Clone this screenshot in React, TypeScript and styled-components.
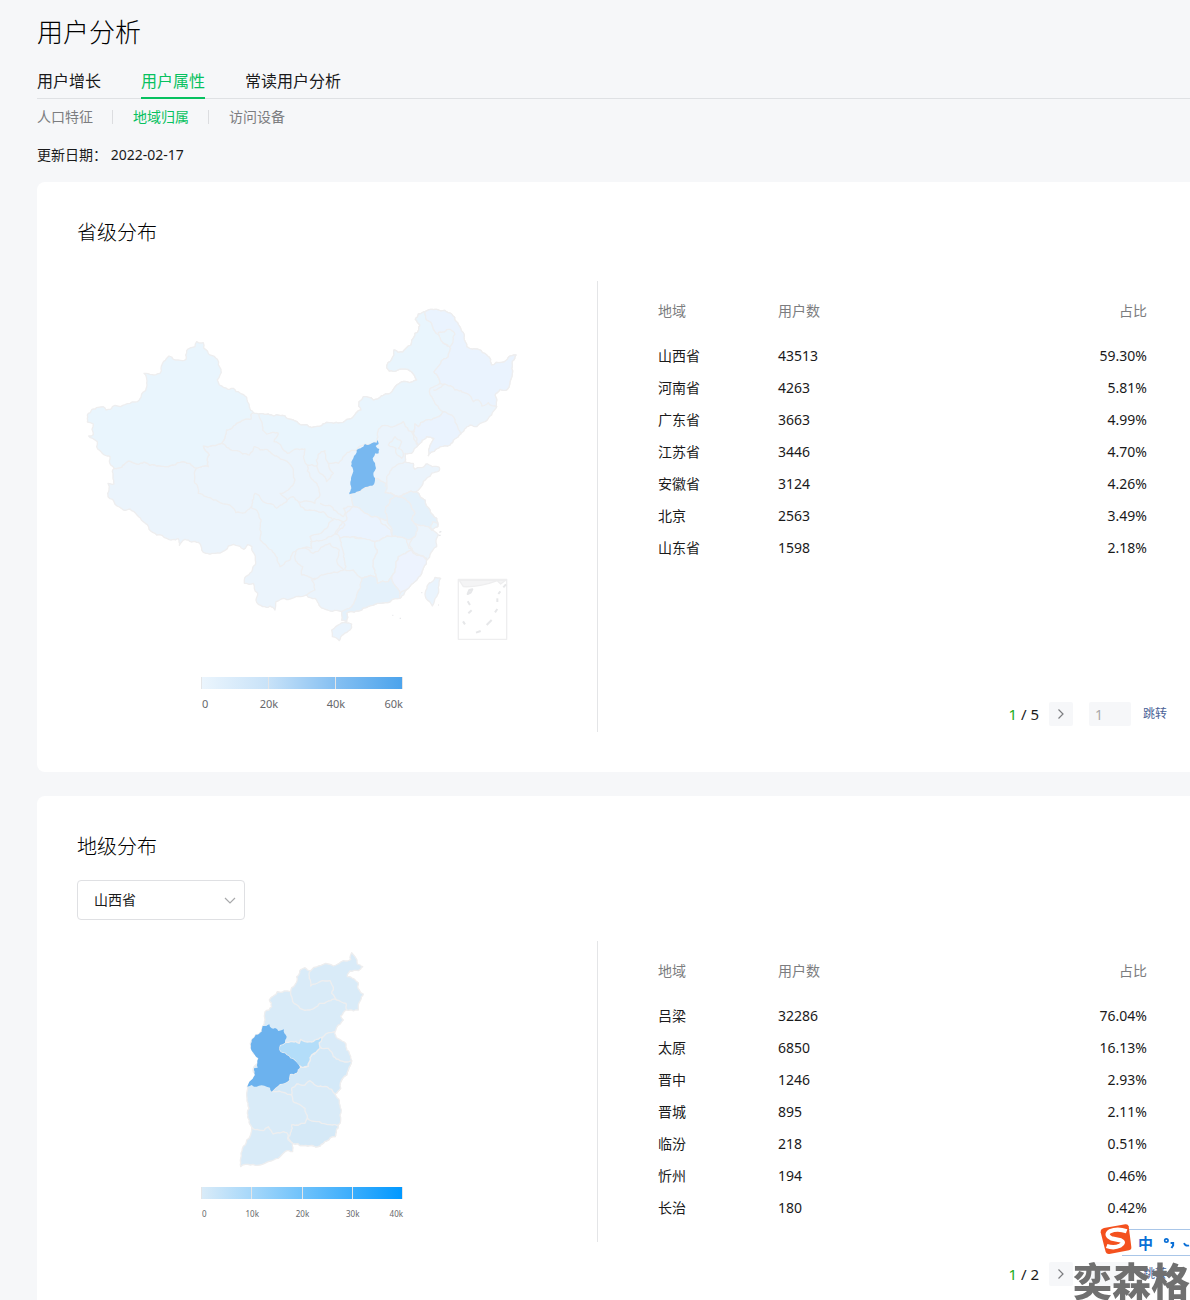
import React from "react";
import styled, { createGlobalStyle } from "styled-components";

const GlobalStyle = createGlobalStyle`
  * { box-sizing: border-box; }
  body {
    margin: 0;
    background: #f6f7f9;
    color: #1a1a1b;
    font-family: "Noto Sans", "Noto Sans CJK SC", sans-serif;
    font-size: 14px;
    font-weight: 400;
    line-height: 20px;
  }
  button, input, select { font: inherit; color: inherit; }
`;

/* ---------- page parts ---------- */

const Page = styled.main`
  height: 100vh;
  overflow: hidden;
  padding: 12px 0 0 37px;
`;

const Title = styled.h1`
  margin: 0 0 17px;
  color: #000;
  font-size: 26px;
  font-weight: 300;
  line-height: 40px;
`;

const Tabs = styled.nav`
  display: flex;
  gap: 40px;
  border-bottom: 1px solid #dfe1e4;
`;

const Tab = styled.a<{ $active?: boolean }>`
  margin-bottom: -1px;
  padding-bottom: 4px;
  border-bottom: 2px solid ${(p) => (p.$active ? "#07c160" : "transparent")};
  color: ${(p) => (p.$active ? "#07c160" : "inherit")};
  font-size: 16px;
  line-height: 24px;
  text-decoration: none;
`;

const SubTabs = styled.nav`
  display: flex;
  align-items: center;
  margin: 8px 0 18px;
`;

const SubTab = styled.a<{ $active?: boolean }>`
  color: ${(p) => (p.$active ? "#07c160" : "#7c7d80")};
  text-decoration: none;
`;

const Separator = styled.span`
  width: 1px;
  height: 14px;
  margin: 0 20px 0 19px;
  background: #dcdde0;
`;

const Updated = styled.p`
  margin: 0 0 17px;
`;

const Card = styled.section`
  margin-bottom: 24px;
  padding: 36px 23px 40px 40px;
  border-radius: 8px 0 0 8px;
  background: #fff;
`;

const CardTitle = styled.h2`
  margin: 0;
  color: #000;
  font-size: 20px;
  font-weight: 300;
  line-height: 30px;
`;

const SelectBox = styled.label`
  position: relative;
  display: block;
  width: 168px;
  margin-top: 18px;
  svg {
    position: absolute;
    top: 16px;
    right: 9px;
    pointer-events: none;
  }
`;

const Select = styled.select`
  appearance: none;
  width: 100%;
  height: 40px;
  padding: 0 32px 0 16px;
  border: 1px solid #dfe0e3;
  border-radius: 4px;
  background: #fff;
`;

const Split = styled.div<{ $gap: number }>`
  display: flex;
  align-items: flex-start;
  margin-top: ${(p) => p.$gap}px;
`;

const Chart = styled.div<{ $height: number; $top: number }>`
  flex: 0 0 521px;
  height: ${(p) => p.$height}px;
  padding: ${(p) => p.$top}px 70px 0 0;
  border-right: 1px solid #e4e5e7;
  svg { display: block; width: 100%; }
`;

const Legend = styled.div<{ $top: number }>`
  width: 202px;
  margin: ${(p) => p.$top}px auto 0;
`;

const LegendBar = styled.div<{ $fill: string }>`
  display: flex;
  height: 12px;
  border-left: 1px solid #e4e5e7;
  background: ${(p) => p.$fill};
`;

const LegendStep = styled.span`
  flex: 1;
  border-right: 1px solid #e4e5e7;
`;

const LegendLabels = styled.div<{ $size: number }>`
  display: flex;
  margin-top: 5px;
  color: #66676b;
  font-size: ${(p) => p.$size}px;
  span { flex: 2 0 0; text-align: center; }
  span:first-child { flex-grow: 1; padding-left: 1px; text-align: left; }
  span:last-child { flex-grow: 1; text-align: right; }
`;

const Detail = styled.div`
  flex: 1;
  padding-left: 60px;
`;

const TableArea = styled.div<{ $height: number }>`
  min-height: ${(p) => p.$height}px;
  padding-right: 20px;
`;

const Table = styled.table`
  width: 100%;
  border-collapse: collapse;
  th { height: 59px; color: #7c7d80; font-weight: 400; }
  td { height: 32px; }
  th, td { padding: 0; text-align: left; }
  th:first-child { width: 120px; }
  th:last-child, td:last-child { text-align: right; }
`;

const Pager = styled.div`
  display: flex;
  align-items: center;
  justify-content: flex-end;
  height: 24px;
`;

const PageCount = styled.span`
  margin-right: 10px;
  font-size: 15px;
  b { color: #1aad19; font-weight: 400; }
`;

const NextButton = styled.button`
  display: grid;
  place-items: center;
  width: 24px;
  height: 24px;
  margin-right: 16px;
  padding: 0;
  border: 0;
  border-radius: 2px;
  background: #f6f7f9;
`;

const PageInput = styled.input`
  width: 42px;
  height: 24px;
  margin-right: 12px;
  padding: 0 6px;
  border: 0;
  border-radius: 2px;
  background: #f6f7f9;
  font-size: 14px;
  &::placeholder { color: #a9a9ab; opacity: 1; }
`;

const JumpLink = styled.a`
  color: #4a6296;
  font-size: 12px;
  text-decoration: none;
`;

/* ---------- floating layers ---------- */

const ImeBar = styled.aside`
  position: fixed;
  right: 0;
  bottom: 44px;
  display: flex;
  align-items: flex-end;
  width: 90px;
  height: 32px;
`;

const ImeLogo = styled.svg`
  position: relative;
  z-index: 1;
  flex: none;
  align-self: flex-start;
`;

const ImeKeys = styled.div`
  display: flex;
  align-items: center;
  gap: 10px;
  flex: 1;
  height: 27px;
  margin-left: -10px;
  padding-left: 16px;
  border: solid #a9c6e8;
  border-width: 1px 0;
  background: #fff;
  color: #0a6fd6;
  font-size: 15px;
  font-weight: 700;
  overflow: hidden;
  white-space: nowrap;
`;

const Watermark = styled.div`
  position: fixed;
  right: 0;
  bottom: 0;
  height: 39px;
  color: #707070;
  font-size: 39px;
  font-weight: 900;
  line-height: 39px;
  pointer-events: none;
`;

/* ---------- map drawing ---------- */

type Point = [number, number];

const parse = (text: string): Point[] =>
  text.trim().split(/\s+/).map((pair) => pair.split(",").map(Number) as Point);

/* Breaks an edge into small irregular steps. The offsets depend only on the
   two end points, so neighbouring regions keep a common border. */
const splitEdge = (a: Point, b: Point, depth: number): Point[] => {
  const length = Math.hypot(b[0] - a[0], b[1] - a[1]);
  if (depth === 0 || length < 9) return [b];
  const seed = Math.sin((a[0] + b[0]) * 12.9898 + (a[1] + b[1]) * 78.233) * 43758.5453;
  const shift = (seed - Math.floor(seed) - 0.5) * Math.min(length * 0.32, 10);
  const forward = a[0] < b[0] || (a[0] === b[0] && a[1] < b[1]) ? 1 : -1;
  const mid: Point = [
    Math.round((a[0] + b[0]) / 2 - (forward * shift * (b[1] - a[1])) / length),
    Math.round((a[1] + b[1]) / 2 + (forward * shift * (b[0] - a[0])) / length),
  ];
  return [...splitEdge(a, mid, depth - 1), ...splitEdge(mid, b, depth - 1)];
};

const toPath = (text: string, closed: boolean) => {
  const points = parse(text);
  const ring = closed ? [...points, points[0]] : points;
  const out: Point[] = [ring[0]];
  for (let i = 1; i < ring.length; i++) out.push(...splitEdge(ring[i - 1], ring[i], 3));
  return "M" + out.map((p) => p.join(" ")).join("L") + (closed ? "Z" : "");
};

interface Shape { fill: string; points: string }

const BORDER = "#eeeeef";

const Region = ({ fill, points }: Shape) => <path d={toPath(points, true)} fill={fill} />;
const Border = ({ points }: { points: string }) => <path d={toPath(points, false)} fill="none" />;

const LIGHT = "#e9f5fd";
const PALE = "#ebf4fc";
const LILAC = "#eaf3fe";
const DEEP = "#e4f1fb";

const chinaShapes: Shape[] = [
  { fill: PALE, points: "520,338 537,342 580,348 615,348 640,360 660,373 695,383 740,367 795,363 820,350 843,330 837,305 850,290 880,300 930,280 950,255 980,245 1010,240 1000,222 975,207 950,212 928,213 920,203 942,150 968,156 993,135 1005,100 1020,75 1006,58 1015,42 1035,35 1070,28 1115,42 1142,85 1160,140 1195,148 1220,165 1235,195 1265,187 1308,165 1295,205 1282,268 1260,268 1245,285 1250,320 1235,345 1190,380 1170,375 1142,402 1110,435 1080,440 1045,467 1048,445 1062,415 1040,410 1015,435 995,460 975,460 975,485 1000,490 1005,508 1038,492 1078,502 1078,512 1040,535 1008,575 1035,600 1050,630 1070,655 1073,680 1055,690 1075,705 1070,740 1040,780 1025,820 985,865 960,895 900,910 845,930 800,940 800,965 785,960 785,935 730,925 705,895 680,885 630,897 610,895 588,905 585,930 570,918 548,920 528,900 533,880 520,850 493,850 497,830 525,795 522,760 516,740 503,734 492,748 460,733 405,760 370,757 355,727 315,718 298,736 295,716 260,715 230,705 190,665 150,627 130,630 84,590 84,550 102,552 98,510 103,505 125,502 142,485 175,493 192,486 210,496 230,498 270,497 300,487 330,490 350,504 385,500 383,485 388,465 370,438 425,430 440,390 460,378 480,366 512,358 512,345" },
  { fill: LIGHT, points: "22,345 36,328 54,322 70,320 78,330 92,328 105,316 122,320 150,310 178,300 185,282 197,272 197,225 192,220 240,220 243,205 267,168 280,178 308,182 318,178 320,152 330,144 345,140 350,125 370,128 372,145 390,165 412,178 423,208 412,240 418,255 460,265 500,292 508,320 520,338 512,345 512,358 480,366 460,378 440,390 425,430 370,438 388,465 383,485 385,500 350,504 330,490 300,487 270,497 230,498 210,496 192,486 175,493 142,485 125,502 103,505 92,495 90,470 60,452 50,440 52,425 38,415 26,408 40,404 40,372 22,366" },
  { fill: LIGHT, points: "537,342 580,348 615,348 640,360 660,373 695,383 740,367 795,363 820,350 843,330 837,305 850,290 880,300 930,280 950,255 980,245 1010,240 1000,222 975,207 950,212 928,213 920,203 942,150 968,156 993,135 1005,100 1020,75 1006,58 1015,42 1035,35 1040,60 1055,70 1065,95 1080,108 1090,130 1112,145 1105,170 1062,215 1080,250 1050,265 1060,300 1090,335 1070,352 1035,362 1015,380 1005,372 1002,395 985,392 970,365 940,380 905,378 892,400 892,422 855,432 830,450 795,465 775,490 745,490 735,452 715,462 710,498 682,495 670,470 675,447 640,450 622,460 605,442 582,425 595,400 560,402 548,390" },
  { fill: LILAC, points: "1035,35 1070,28 1115,42 1142,85 1160,140 1195,148 1220,165 1235,195 1265,187 1308,165 1295,205 1282,268 1260,268 1245,285 1250,320 1225,308 1205,318 1195,300 1180,305 1160,280 1125,270 1095,252 1080,250 1062,215 1105,170 1112,145 1090,130 1080,108 1065,95 1055,70 1040,60" },
  { fill: LIGHT, points: "1075,97 1110,88 1125,103 1110,140 1092,130" },
  { fill: LILAC, points: "1090,335 1115,345 1142,402 1110,435 1080,440 1045,467 1048,445 1062,415 1040,410 1015,435 1000,395 1002,395 1005,372 1015,380 1035,362 1070,352" },
  { fill: LIGHT, points: "925,435 945,410 965,425 955,445 970,460 965,475 952,465 948,445" },
  { fill: LIGHT, points: "512,622 525,580 545,600 590,625 622,600 640,590 655,605 675,630 730,635 760,660 740,685 690,710 695,745 665,745 650,750 630,780 600,800 575,750 550,730 541,720 541,680 535,640" },
  { fill: DEEP, points: "885,535 920,550 915,578 948,588 930,600 918,620 925,660 890,650 855,640 820,620 812,588 850,565 877,555" },
  { fill: DEEP, points: "948,588 975,595 990,610 1005,640 995,660 1013,685 1005,710 980,718 935,710 932,680 918,620 930,600" },
  { fill: DEEP, points: "948,588 1008,575 1035,600 1050,630 1070,655 1073,680 1055,690 1045,680 1015,675 995,660 1005,640 990,610 975,595" },
  { fill: LIGHT, points: "1058,665 1073,670 1073,680 1055,688" },
  { fill: LILAC, points: "820,620 790,625 800,660 765,700 780,715 820,710 860,720 885,725 935,710 932,690 890,650 855,640" },
  { fill: LIGHT, points: "780,715 820,710 885,725 892,750 880,780 888,830 845,835 820,810 795,810 790,770" },
  { fill: LIGHT, points: "885,725 935,710 980,718 995,750 955,770 935,830 925,845 892,850 888,830 880,780 892,750" },
  { fill: "#edf3fe", points: "995,750 1040,775 1040,780 1025,820 985,865 960,880 935,830 955,770" },
  { fill: DEEP, points: "845,835 888,830 892,850 925,845 935,830 960,880 960,895 900,910 845,930 800,940 800,965 785,960 785,935 815,920 830,885" },
  { fill: "#eaf4fd", points: "755,990 780,972 815,972 810,990 778,1022 757,1010" },
  { fill: "#eaf4fd", points: "1038,870 1065,832 1082,835 1070,890 1057,918 1038,895" },
];

const shanxiProvince =
  "813,498 820,475 830,450 842,445 855,432 864,435 875,430 890,428 892,420 896,432 887,438 892,445 898,447 896,460 886,460 878,475 888,505 880,522 885,535 877,557 850,565 830,575 808,583 814,565 813,540 818,520";

const chinaBorders = [
  "350,504 345,550 355,580 400,600 455,620 467,638 495,638 512,622",
  "425,430 470,452 508,465 522,440 540,450 560,448 590,468 635,500 645,540 625,570 600,580 622,600",
  "682,495 690,530 715,560 720,585 705,610 655,605",
  "745,490 760,520 740,545 720,520 710,498",
  "720,610 755,620 790,650 820,620",
  "1095,252 1060,270",
  "1005,395 995,395 1013,435",
  "975,485 945,500 920,530 915,560",
  "915,578 948,588 1008,575",
  "1005,710 988,735 1000,760 1040,780",
  "760,655 795,675 760,705 730,720 690,725",
  "650,750 645,775 668,800 665,825 710,835 750,820 792,810 770,780 778,750 750,730 700,760 665,745",
  "710,835 695,840 705,870 680,885",
];

const seaMarks = ["533,394 540,405", "535,430 545,421", "519,454 525,463", "558,488 572,483", "590,465 605,450", "615,427 622,417", "622,385 622,396", "625,372 631,364", "640,352 648,343"];

const ChinaMap = () => (
  <svg viewBox="-9 0 1350 1050" role="img" aria-label="省级分布" strokeLinejoin="round">
    <g stroke={BORDER} strokeWidth="4">
      {chinaShapes.map((s) => <Region key={s.points} {...s} />)}
      {chinaBorders.map((b) => <Border key={b} points={b} />)}
      <path d="M1135 838H1280V1018H1135Z" fill="#fff" />
      <path d="M1138 841H1277L1262 852L1252 842Q1200 862 1150 860Z" fill="#f4f4f5" />
    </g>
    <Region fill="#78b8f0" points={shanxiProvince} />
    <g transform="translate(630 510)" stroke="#e6e7e9" strokeWidth="6" fill="none">
      <path d="M533 372L538 360L547 358L542 368Z" />
      {seaMarks.map((m) => <polyline key={m} points={m} />)}
      <path d="M307 436h3M329 445h4M394 368h3M444 405h2M448 187l6 -3M446 196h6" strokeWidth="4" />
    </g>
  </svg>
);

const SOFT = "#d9ebf8";

const shanxiShapes: Shape[] = [
  { fill: SOFT, points: "395,38 405,50 412,72 428,80 415,92 390,93 382,110 415,128 418,150 430,162 422,180 415,210 400,213 380,210 362,228 370,240 350,262 345,275 352,295 378,312 380,330 395,362 368,415 362,445 345,462 360,495 355,555 345,590 320,603 300,618 250,617 218,610 218,635 195,635 175,655 120,675 62,680 62,655 80,600 95,570 95,562 82,520 80,460 82,440 105,405 100,385 115,370 115,355 92,320 95,300 125,275 128,258 135,240 135,215 155,200 148,180 172,155 212,155 230,110 255,83 272,92 295,78 325,72 340,78 370,62 392,58" },
  { fill: "#d4e9f8", points: "300,320 325,325 340,350 360,362 395,362 368,415 362,445 345,462 320,440 285,435 270,422 255,435 230,432 215,445 215,465 165,455 155,455 180,432 208,420 210,402 230,398 240,382 265,378 275,345" },
  { fill: "#d5e9f7", points: "262,535 290,545 320,553 355,555 345,590 320,603 300,618 250,617 218,610 205,590 215,555 255,550" },
  { fill: "#b3ddf9", points: "195,308 238,310 242,298 270,305 310,290 298,308 300,325 275,345 265,378 245,382 225,362 200,345 178,330 180,315" },
];

const luliang =
  "128,258 148,253 155,265 165,264 175,273 192,268 200,290 195,308 180,315 178,330 200,345 225,362 240,382 230,398 210,402 208,420 180,432 155,455 150,443 140,440 110,440 95,435 82,440 88,425 105,405 102,385 113,383 115,355 108,350 92,325 95,300 125,275";

const shanxiBorders = [
  "272,92 272,138 300,125 330,122 340,150 335,160 350,180 378,190 380,210",
  "212,155 218,185 240,205 270,210 300,190 350,180",
  "310,290 345,275",
  "215,465 220,485 255,505 262,535",
  "95,562 130,572 145,560 160,582 200,578 205,600 218,610",
];

const ShanxiMap = () => (
  <svg viewBox="-429 3 1350 720" role="img" aria-label="地级分布" strokeLinejoin="round">
    <g stroke={BORDER} strokeWidth="4">
      {shanxiShapes.map((s) => <Region key={s.points} {...s} />)}
      {shanxiBorders.map((b) => <Border key={b} points={b} />)}
    </g>
    <Region fill="#6cb2ee" points={luliang} />
  </svg>
);

/* ---------- composed blocks ---------- */

const Scale = ({ top, fill, labels, size }: { top: number; fill: string; labels: string[]; size: number }) => (
  <Legend $top={top}>
    <LegendBar $fill={fill}>
      {labels.slice(1).map((l) => <LegendStep key={l} />)}
    </LegendBar>
    <LegendLabels $size={size}>
      {labels.map((l) => <span key={l}>{l}</span>)}
    </LegendLabels>
  </Legend>
);

type Row = [string, string, string];

const DataTable = ({ rows, height, pages }: { rows: Row[]; height: number; pages: number }) => (
  <Detail>
    <TableArea $height={height}>
      <Table>
        <thead>
          <tr><th>地域</th><th>用户数</th><th>占比</th></tr>
        </thead>
        <tbody>
          {rows.map(([name, count, share]) => (
            <tr key={name}><td>{name}</td><td>{count}</td><td>{share}</td></tr>
          ))}
        </tbody>
      </Table>
    </TableArea>
    <Pager>
      <PageCount><b>1</b> / {pages}</PageCount>
      <NextButton type="button" aria-label="下一页">
        <svg width="8" height="12" viewBox="0 0 8 12" fill="none" stroke="#7c7d80" strokeWidth="1.2">
          <path d="M1.5 1.5L6 6L1.5 10.5" />
        </svg>
      </NextButton>
      <PageInput placeholder="1" aria-label="页码" />
      <JumpLink href="#">跳转</JumpLink>
    </Pager>
  </Detail>
);

const provinces: Row[] = [
  ["山西省", "43513", "59.30%"],
  ["河南省", "4263", "5.81%"],
  ["广东省", "3663", "4.99%"],
  ["江苏省", "3446", "4.70%"],
  ["安徽省", "3124", "4.26%"],
  ["北京", "2563", "3.49%"],
  ["山东省", "1598", "2.18%"],
];

const cities: Row[] = [
  ["吕梁", "32286", "76.04%"],
  ["太原", "6850", "16.13%"],
  ["晋中", "1246", "2.93%"],
  ["晋城", "895", "2.11%"],
  ["临汾", "218", "0.51%"],
  ["忻州", "194", "0.46%"],
  ["长治", "180", "0.42%"],
];

export default function App() {
  return (
    <>
      <GlobalStyle />
      <Page>
        <Title>用户分析</Title>
        <Tabs>
          <Tab href="#">用户增长</Tab>
          <Tab href="#" $active>用户属性</Tab>
          <Tab href="#">常读用户分析</Tab>
        </Tabs>
        <SubTabs>
          <SubTab href="#">人口特征</SubTab>
          <Separator />
          <SubTab href="#" $active>地域归属</SubTab>
          <Separator />
          <SubTab href="#">访问设备</SubTab>
        </SubTabs>
        <Updated>更新日期： 2022-02-17</Updated>

        <Card>
          <CardTitle>省级分布</CardTitle>
          <Split $gap={33}>
            <Chart $height={451} $top={19}>
              <ChinaMap />
              <Scale
                top={27}
                size={11}
                fill="linear-gradient(90deg, #ebf5fd, #c8e2f8 33%, #86c0f2 66%, #4ba3ec)"
                labels={["0", "20k", "40k", "60k"]}
              />
            </Chart>
            <DataTable rows={provinces} height={421} pages={5} />
          </Split>
        </Card>

        <Card>
          <CardTitle>地级分布</CardTitle>
          <SelectBox>
            <Select aria-label="省份" defaultValue="山西省">
              {provinces.map(([name]) => <option key={name}>{name}</option>)}
            </Select>
            <svg width="12" height="10" viewBox="0 0 12 10" fill="none" stroke="#a8a9ab" strokeWidth="1.2">
              <path d="M1 2L6 7L11 2" />
            </svg>
          </SelectBox>
          <Split $gap={21}>
            <Chart $height={301} $top={0}>
              <ShanxiMap />
              <Scale
                top={6}
                size={8}
                fill="linear-gradient(90deg, #d9ebf8, #a5d7fa 25%, #6fc2fb 50%, #3aadfc 75%, #0098ff)"
                labels={["0", "10k", "20k", "30k", "40k"]}
              />
            </Chart>
            <DataTable rows={cities} height={321} pages={2} />
          </Split>
        </Card>
      </Page>

      <Watermark>奕森格</Watermark>
      <ImeBar>
        <ImeLogo width="32" height="32" viewBox="0 0 96 96">
          <path d="M12 12L76 1Q84 0 86 7L94 69Q95 77 87 79L28 90Q20 91 17 84L2 25Q1 15 12 12Z" fill="#f4511e" />
          <path d="M80 22Q52 12 30 22Q14 33 34 43L62 49Q76 56 60 65Q42 74 20 66" fill="none" stroke="#fff" strokeWidth="13" />
        </ImeLogo>
        <ImeKeys>
          <span>中</span>
          <svg width="32" height="16" viewBox="0 0 32 16" fill="none" stroke="#0a6fd6" strokeWidth="2">
            <circle cx="4" cy="5" r="2" />
            <path d="M9 8h3v3l-2 3" strokeWidth="2.4" />
            <path d="M25 8q1 4 6 3" />
          </svg>
        </ImeKeys>
      </ImeBar>
    </>
  );
}
